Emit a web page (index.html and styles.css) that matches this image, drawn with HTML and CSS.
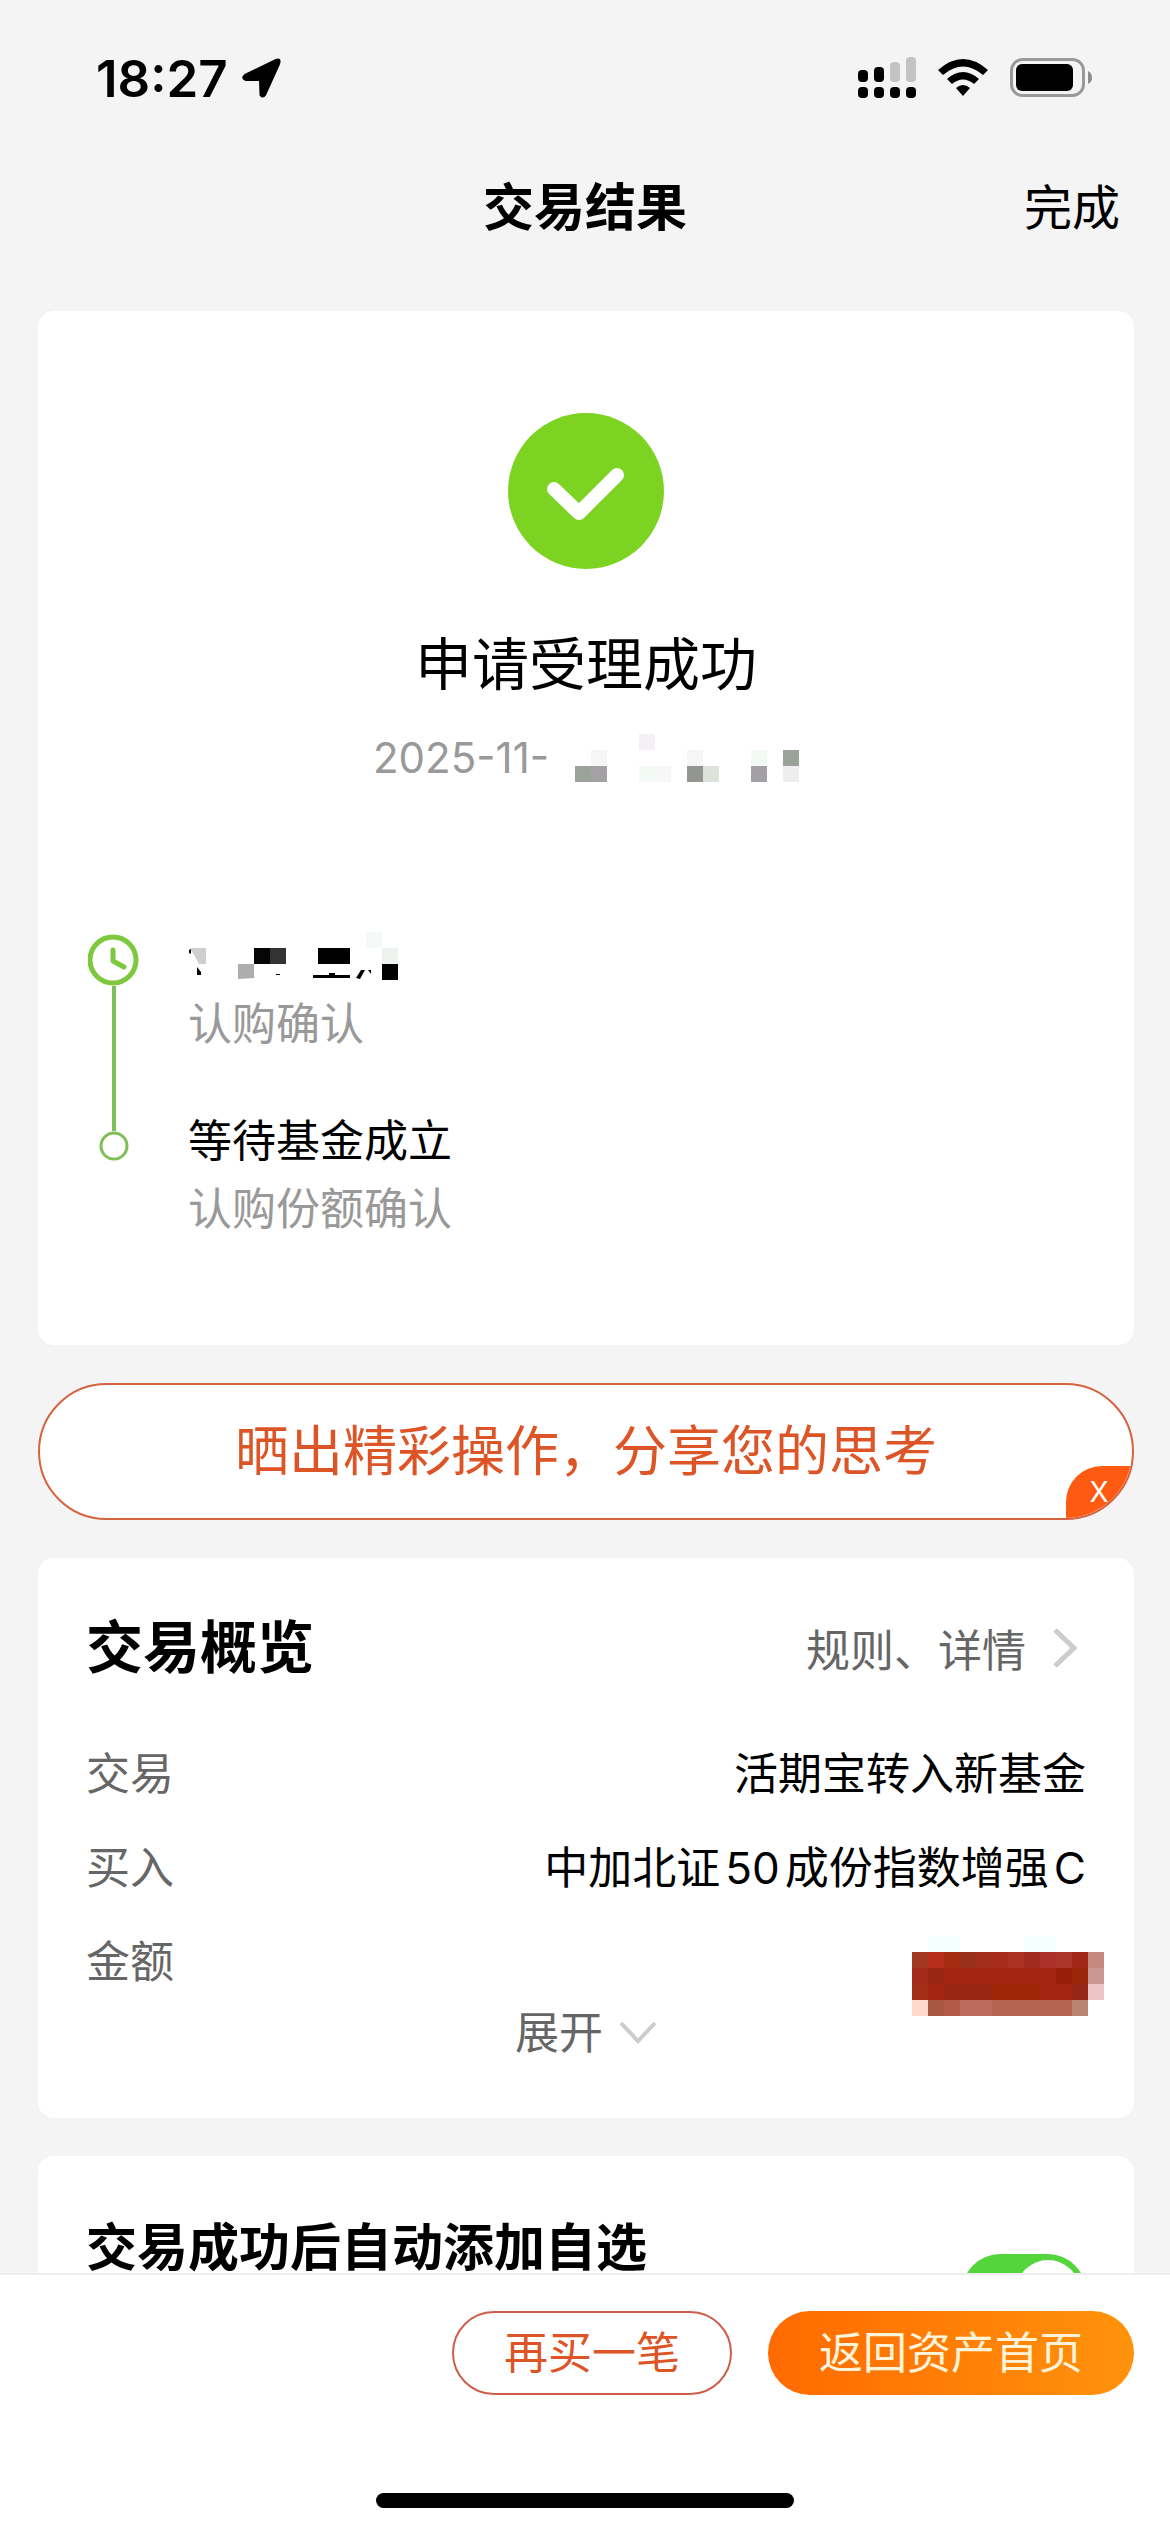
FILE: index.html
```html
<!DOCTYPE html>
<html lang="zh-CN">
<head>
  <meta charset="UTF-8">
  <meta name="viewport" content="width=device-width, initial-scale=1.0">
  <title>交易结果</title>
  <link rel="stylesheet" href="styles.css">
</head>
<body>

  <!-- Status Bar -->
  <div class="status-bar">
    <div class="status-left">
      <span class="time">18:27</span>
      <svg width="40" height="40" viewBox="0 0 40 40">
        <path d="M3 17 L34 2 Q39 0 37 6 L23 37 Q21 40 18.500 37 L18 22 L4 22 Q-1 20 3 17 Z" fill="#000" stroke="#000" stroke-width="2" stroke-linejoin="round"/>
      </svg>
    </div>
    <div class="status-right">
      <svg width="58" height="42" viewBox="0 0 58 42">
        <rect x="0" y="13" width="10" height="12" rx="4"/>
        <rect x="16" y="10" width="10" height="15" rx="4"/>
        <rect x="32" y="5" width="10" height="20" rx="4" fill="#c3c3c3"/>
        <rect x="48" y="0" width="10" height="25" rx="4" fill="#c3c3c3"/>
        <rect x="0" y="30" width="10" height="11" rx="4"/>
        <rect x="16" y="30" width="10" height="11" rx="4"/>
        <rect x="32" y="30" width="10" height="11" rx="4"/>
        <rect x="48" y="30" width="10" height="11" rx="4"/>
      </svg>
      <svg width="50" height="38" viewBox="0 0 50 38">
        <path d="M0 11 Q25 -11 50 11 L45 16 Q25 -1 5 16 Z"/>
        <path d="M9 20 Q25 6 41 20 L36 25 Q25 16 14 25 Z"/>
        <path d="M18 29 Q25 23 32 29 L25 37 Z"/>
      </svg>
      <svg width="83" height="40" viewBox="0 0 83 40">
        <rect x="1.500" y="1.500" width="72" height="36" rx="11" fill="none" stroke="#999" stroke-width="3"/>
        <rect x="6" y="6" width="57" height="27" rx="6"/>
        <path d="M78 13 Q82 15 82 19.500 Q82 24 78 26 Z" fill="#8c8c8c"/>
      </svg>
    </div>
  </div>

  <!-- Nav Bar -->
  <header class="nav-bar">
    <h1>交易结果</h1>
    <button class="done-btn" type="button">完成</button>
  </header>

  <main class="content">

    <!-- Result Section -->
    <section class="card result">
      <svg class="result-icon" width="156" height="156" viewBox="0 0 156 156">
        <circle cx="78" cy="78" r="78" fill="#7dd321"/>
        <path d="M46 76 L71 100 L109 62" fill="none" stroke="#fff" stroke-width="14" stroke-linecap="round" stroke-linejoin="round"/>
      </svg>
      <h2>申请受理成功</h2>
      <div class="result-date">
        <span>2025-11-</span>
        <svg width="224" height="48" viewBox="0 0 224 48" shape-rendering="crispEdges">
          <rect x="0" y="32" width="16" height="16" fill="#9aa29a"/>
          <rect x="16" y="32" width="16" height="16" fill="#a3a1a3"/>
          <rect x="16" y="16" width="16" height="16" fill="#f6f6f7"/>
          <rect x="64" y="0" width="16" height="16" fill="#f5f0f5"/>
          <rect x="64" y="32" width="16" height="16" fill="#f3faf6"/>
          <rect x="80" y="32" width="16" height="16" fill="#f7f7f7"/>
          <rect x="112" y="16" width="16" height="16" fill="#f6f6f6"/>
          <rect x="112" y="32" width="16" height="16" fill="#929590"/>
          <rect x="128" y="32" width="16" height="16" fill="#dde2db"/>
          <rect x="176" y="16" width="16" height="16" fill="#f3faf6"/>
          <rect x="176" y="32" width="16" height="16" fill="#a29fa5"/>
          <rect x="208" y="16" width="16" height="16" fill="#9aa29a"/>
          <rect x="208" y="32" width="16" height="16" fill="#eee"/>
        </svg>
      </div>

      <ol class="steps">
        <li class="step">
          <div class="step-marker">
            <svg width="52" height="52" viewBox="0 0 52 52" fill="none" stroke="#7dc83c">
              <circle cx="25" cy="26" r="23" stroke-width="5"/>
              <path d="M25 16 V27 L36 33" stroke-width="5" stroke-linecap="round" stroke-linejoin="round"/>
            </svg>
          </div>
          <div class="step-text">
            <div class="step-title">
              <svg width="210" height="48" viewBox="0 0 210 48">
                <path d="M2 16 H18 V32 H11 Z" fill="#cfcfcf"/>
                <path d="M1 18 L3 17 V22 L1 21 Z M9 35 L13 40 V43 H9 Z"/>
                <path d="M50 32 H66 V46 L50 47 Z" fill="#adadad"/>
                <rect x="66" y="16" width="16" height="16" fill="#060606"/>
                <rect x="82" y="16" width="16" height="16" fill="#333"/>
                <path d="M88 42 H92 V43 H88 Z"/>
                <rect x="130" y="16" width="32" height="16"/>
                <path d="M125 43 H162 V46 H125 Z M141 41 H147 V44 H141 Z"/>
                <path d="M173 38 L177 38 L172 47 L168 46 Z M180 38 H183 V42 Z"/>
                <rect x="178" y="0" width="16" height="16" fill="#f5faf8"/>
                <rect x="194" y="16" width="16" height="16" fill="#eef3ef"/>
                <rect x="194" y="32" width="16" height="16"/>
              </svg>
            </div>
            <div class="step-note">认购确认</div>
          </div>
        </li>
        <li class="step">
          <div class="step-marker">
            <svg width="30" height="30" viewBox="0 0 30 30" fill="none" stroke="#7dc057">
              <circle cx="15" cy="15" r="13" stroke-width="3"/>
            </svg>
          </div>
          <div class="step-text">
            <div class="step-title">等待基金成立</div>
            <div class="step-note">认购份额确认</div>
          </div>
        </li>
      </ol>
    </section>

    <!-- Share Banner -->
    <div class="share">
      <a href="#share">晒出精彩操作，分享您的思考</a>
      <button class="share-close" type="button" aria-label="关闭">X</button>
    </div>

    <!-- Overview Section -->
    <section class="card overview">
      <div class="overview-head">
        <h2>交易概览</h2>
        <a class="rules" href="#rules">规则、详情
          <svg width="26" height="42" viewBox="0 0 26 42" fill="none" stroke="#ccc" stroke-width="5">
            <path d="M3 3 L22 21 L3 39"/>
          </svg>
        </a>
      </div>
      <dl>
        <div class="row">
          <dt>交易</dt>
          <dd>活期宝转入新基金</dd>
        </div>
        <div class="row">
          <dt>买入</dt>
          <dd>中加北证<span class="latin">50</span>成份指数增强<span class="latin">C</span></dd>
        </div>
        <div class="row">
          <dt>金额</dt>
          <dd>
            <svg class="amount-mask" width="192" height="80" viewBox="0 0 192 80" shape-rendering="crispEdges">
              <rect x="16" y="0" width="32" height="16" fill="#f5fffe"/>
              <rect x="112" y="0" width="32" height="16" fill="#f5fffe"/>
              <rect x="0" y="16" width="176" height="48" fill="#a32410"/>
              <rect x="0" y="16" width="16" height="16" fill="#a23722"/>
              <rect x="16" y="16" width="16" height="16" fill="#b62d1a"/>
              <rect x="32" y="16" width="16" height="16" fill="#a52b11"/>
              <rect x="48" y="16" width="16" height="16" fill="#99301b"/>
              <rect x="64" y="16" width="16" height="16" fill="#a22d18"/>
              <rect x="80" y="16" width="16" height="16" fill="#a82b1b"/>
              <rect x="96" y="16" width="16" height="16" fill="#ac3324"/>
              <rect x="112" y="16" width="16" height="16" fill="#a22b20"/>
              <rect x="128" y="16" width="16" height="16" fill="#ac302a"/>
              <rect x="144" y="16" width="16" height="16" fill="#ab3629"/>
              <rect x="160" y="16" width="16" height="16" fill="#a02818"/>
              <rect x="176" y="16" width="16" height="16" fill="#c68982"/>
              <rect x="0" y="32" width="16" height="16" fill="#a32b1b"/>
              <rect x="16" y="32" width="16" height="16" fill="#982512"/>
              <rect x="144" y="32" width="16" height="16" fill="#9a1d09"/>
              <rect x="160" y="32" width="16" height="16" fill="#992609"/>
              <rect x="176" y="32" width="16" height="16" fill="#ca9690"/>
              <rect x="0" y="48" width="16" height="16" fill="#a32f18"/>
              <rect x="32" y="48" width="48" height="16" fill="#972611"/>
              <rect x="80" y="48" width="48" height="16" fill="#a12508"/>
              <rect x="160" y="48" width="16" height="16" fill="#952618"/>
              <rect x="176" y="48" width="16" height="16" fill="#edc5c6"/>
              <rect x="0" y="64" width="16" height="16" fill="#ffd9cc"/>
              <rect x="16" y="64" width="16" height="16" fill="#a95740"/>
              <rect x="32" y="64" width="16" height="16" fill="#b35b49"/>
              <rect x="48" y="64" width="32" height="16" fill="#bb6a5c"/>
              <rect x="80" y="64" width="80" height="16" fill="#b46450"/>
              <rect x="160" y="64" width="16" height="16" fill="#b98572"/>
            </svg>
          </dd>
        </div>
      </dl>
      <button class="expand-btn" type="button">展开
        <svg width="38" height="24" viewBox="0 0 38 24" fill="none" stroke="#ccc" stroke-width="4">
          <path d="M2 2 L19 20 L36 2"/>
        </svg>
      </button>
    </section>

    <!-- Auto Add Section -->
    <section class="card auto-add">
      <label for="auto-add">交易成功后自动添加自选</label>
      <input type="checkbox" class="switch" id="auto-add" checked>
    </section>
  </main>

  <!-- Footer -->
  <footer class="footer">
    <div class="actions">
      <button class="btn btn-outline" type="button">再买一笔</button>
      <button class="btn btn-primary" type="button">返回资产首页</button>
    </div>
    <div class="home-bar"></div>
  </footer>

</body>
</html>
```
FILE: styles.css
```css
/* General Styles */
* {
  box-sizing: border-box;
}

body {
  font-family: Inter, 'Noto Sans CJK SC', sans-serif;
  font-size: 44px;
  background-color: #f4f4f4;
  color: #000;
  margin: 0;
  display: flex;
  flex-direction: column;
  height: 100vh;
}

h1, h2, dl, dd, ol {
  margin: 0;
  padding: 0;
}

svg {
  display: block;
  flex-shrink: 0;
}

button {
  font-family: inherit;
  font-size: inherit;
  color: inherit;
  background: none;
  border: none;
  padding: 0;
  cursor: pointer;
}

a {
  color: inherit;
  text-decoration: none;
}

/* Status Bar */
.status-bar {
  display: flex;
  justify-content: space-between;
  align-items: center;
  height: 156px;
  padding: 0 77px 0 96px;
}

.status-left {
  display: flex;
  align-items: center;
  gap: 14px;
}

.status-right {
  display: flex;
  align-items: center;
  gap: 22px;
}

.time {
  font-size: 51px;
  font-weight: 600;
}

/* Nav Bar */
.nav-bar {
  display: grid;
  grid-template-columns: 1fr auto 1fr;
  align-items: center;
  height: 96px;
  padding: 0 50px;
}

.nav-bar h1 {
  grid-column: 2;
  font-size: 51px;
}

.done-btn {
  justify-self: end;
  font-size: 48px;
}

/* Content */
.content {
  flex: 1;
  min-height: 0;
  overflow: hidden;
  display: flex;
  flex-direction: column;
  gap: 38px;
  padding: 59px 36px 0 38px;
}

.card {
  flex-shrink: 0;
  padding: 0 48px;
  border-radius: 16px;
  background-color: #fff;
}

/* Result Section */
.result {
  padding-top: 102px;
  padding-bottom: 102px;
}

.result-icon {
  margin: 0 auto;
}

.result h2 {
  margin-top: 56px;
  font-size: 57px;
  font-weight: 400;
  line-height: 80px;
  text-align: center;
}

.result-date {
  display: flex;
  justify-content: center;
  align-items: center;
  gap: 26px;
  margin-top: 23px;
  font-size: 42px;
  line-height: 60px;
  color: #999;
}

/* Steps */
.steps {
  margin-top: 134px;
  list-style: none;
}

.step {
  display: flex;
  gap: 46px;
  line-height: 68px;
}

.step:first-child .step-text {
  padding-bottom: 49px;
}

.step-marker {
  display: flex;
  flex-direction: column;
  align-items: center;
  width: 56px;
}

.step:first-child .step-marker::before {
  content: '';
  height: 12px;
}

.step:first-child .step-marker::after {
  content: '';
  flex: 1;
  width: 4px;
  background-color: #7dc057;
}

.step:last-child .step-marker::before {
  content: '';
  width: 4px;
  height: 24px;
  background-color: #7dc057;
}

.step-title {
  display: flex;
  align-items: center;
  height: 68px;
}

.step-note {
  color: #999;
}

/* Share Banner */
.share {
  position: relative;
  flex-shrink: 0;
  height: 137px;
  border: 2px solid #d4633f;
  border-radius: 69px;
  background-color: #fff;
  overflow: hidden;
}

.share a {
  display: block;
  font-size: 54px;
  line-height: 133px;
  text-align: center;
  color: #dd5426;
}

.share-close {
  position: absolute;
  right: 0;
  bottom: 0;
  width: 66px;
  height: 52px;
  border-radius: 36px 0 0 0;
  background-color: #ff5a12;
  color: #fff;
  font-size: 28px;
}

/* Overview Section */
.overview {
  padding-top: 50px;
  padding-bottom: 61px;
}

.overview-head {
  display: flex;
  justify-content: space-between;
  align-items: center;
  margin-bottom: 39px;
}

.overview-head h2 {
  font-size: 57px;
  line-height: 80px;
}

.rules {
  display: flex;
  align-items: center;
  gap: 26px;
  padding-right: 8px;
  color: #666;
}

.row {
  position: relative;
  display: flex;
  justify-content: space-between;
  line-height: 94px;
}

.row dt {
  color: #666;
}

.latin {
  margin: 0 5px;
}

.row .latin:last-child {
  margin-right: 0;
}

/* Mask over the amount, a little wider than the text column */
.amount-mask {
  position: absolute;
  right: -18px;
  top: 21px;
}

.expand-btn {
  display: flex;
  justify-content: center;
  align-items: center;
  gap: 16px;
  width: 100%;
  line-height: 48px;
  color: #666;
}

/* Auto Add Section */
.auto-add {
  display: flex;
  justify-content: space-between;
  align-items: flex-start;
  padding-top: 66px;
  padding-bottom: 56px;
}

.auto-add label {
  font-size: 51px;
  font-weight: 700;
  line-height: 52px;
}

.switch {
  appearance: none;
  width: 124px;
  height: 76px;
  margin: 32px 0 0;
  padding: 6px;
  border-radius: 38px;
  background-color: #ddd;
  cursor: pointer;
}

.switch::before {
  content: '';
  display: block;
  width: 64px;
  height: 64px;
  border-radius: 50%;
  background-color: #fff;
}

.switch:checked {
  background-color: #53d53b;
}

.switch:checked::before {
  margin-left: auto;
}

/* Footer */
.footer {
  flex-shrink: 0;
  border-top: 2px solid #eee;
  padding: 36px 36px 24px;
  background-color: #fff;
}

.actions {
  display: flex;
  justify-content: flex-end;
  gap: 36px;
}

.btn {
  height: 84px;
  border-radius: 42px;
  line-height: 80px;
}

.btn-outline {
  padding: 0 50px;
  border: 2px solid #cc5f48;
  color: #dd5426;
}

.btn-primary {
  padding: 0 51px;
  background: linear-gradient(90deg, #ff6a00, #ff930c);
  color: #fff3d9;
}

.home-bar {
  width: 418px;
  height: 15px;
  margin: 98px auto 0;
  border-radius: 8px;
  background-color: #000;
}
```
